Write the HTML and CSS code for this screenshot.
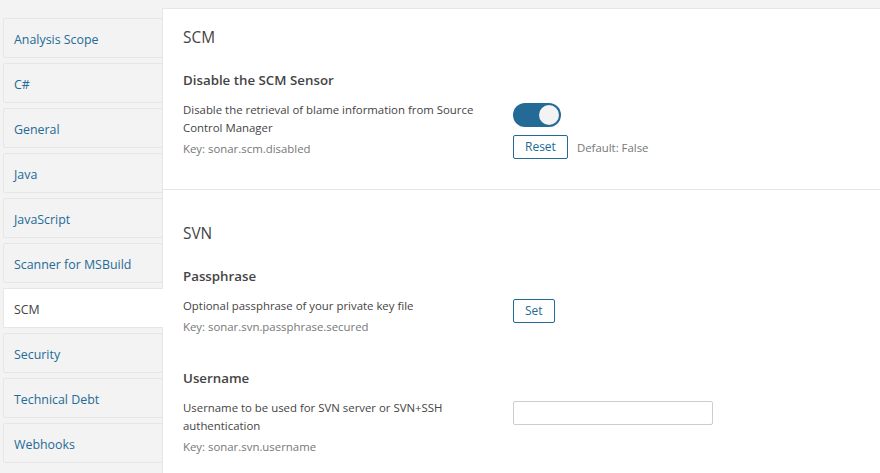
FILE: index.html
```html
<!DOCTYPE html>
<html lang="en">
<head>
<meta charset="utf-8">
<title>Settings</title>
<link rel="stylesheet" href="styles.css">
</head>
<body>
<div class="layout">
  <nav class="sidebar">
    <a class="cat">Analysis Scope</a>
    <a class="cat">C#</a>
    <a class="cat">General</a>
    <a class="cat">Java</a>
    <a class="cat">JavaScript</a>
    <a class="cat">Scanner for MSBuild</a>
    <a class="cat active">SCM</a>
    <a class="cat">Security</a>
    <a class="cat">Technical Debt</a>
    <a class="cat">Webhooks</a>
  </nav>
  <main class="panel">
    <section class="section first">
      <h2 class="section-title">SCM</h2>
      <div class="setting">
        <h3 class="setting-title">Disable the SCM Sensor</h3>
        <div class="setting-row">
          <div class="setting-desc">
            <div class="desc">Disable the retrieval of blame information from Source Control Manager</div>
            <div class="key">Key: sonar.scm.disabled</div>
          </div>
          <div class="setting-input">
            <div class="toggle"><span class="knob"></span></div>
            <div class="actions">
              <button class="btn">Reset</button>
              <span class="default">Default: False</span>
            </div>
          </div>
        </div>
      </div>
    </section>
    <section class="section">
      <h2 class="section-title">SVN</h2>
      <div class="setting">
        <h3 class="setting-title">Passphrase</h3>
        <div class="setting-row">
          <div class="setting-desc">
            <div class="desc">Optional passphrase of your private key file</div>
            <div class="key">Key: sonar.svn.passphrase.secured</div>
          </div>
          <div class="setting-input">
            <button class="btn">Set</button>
          </div>
        </div>
      </div>
      <div class="setting">
        <h3 class="setting-title">Username</h3>
        <div class="setting-row">
          <div class="setting-desc">
            <div class="desc">Username to be used for SVN server or SVN+SSH authentication</div>
            <div class="key">Key: sonar.svn.username</div>
          </div>
          <div class="setting-input">
            <input class="text-input" type="text">
          </div>
        </div>
      </div>
    </section>
  </main>
</div>
</body>
</html>
```
FILE: styles.css
```css
* { box-sizing: border-box; }
html, body { margin: 0; padding: 0; }
body {
  background: #f3f3f3;
  font-family: "Open Sans", "Noto Sans", sans-serif;
  font-size: 11.4px;
  color: #444;
  height: 473px;
  overflow: hidden;
}
.layout {
  display: flex;
  align-items: flex-start;
}
.sidebar {
  width: 163px;
  flex: none;
  padding: 18px 0 0 3px;
  display: flex;
  flex-direction: column;
  gap: 5px;
}
.cat {
  display: flex;
  align-items: center;
  height: 40px;
  padding: 2px 0 0 10px;
  border: 1px solid #e6e6e6;
  border-radius: 2px;
  background: #f3f3f3;
  color: #236a97;
  font-size: 12.4px;
  white-space: nowrap;
}
.cat.active {
  background: #fff;
  color: #444;
  position: relative;
  z-index: 1;
  border-right: none;
  border-radius: 2px 0 0 2px;
}
.panel {
  flex: 1;
  margin-top: 8px;
  margin-left: -1px;
  background: #fff;
  border-top: 1px solid #e6e6e6;
  border-left: 1px solid #e6e6e6;
  min-height: 470px;
}
.section {
  padding: 32px 20px 0 20px;
}
.section.first {
  padding-top: 17px;
  border-bottom: 1px solid #e6e6e6;
}
.section-title {
  margin: 0;
  font-size: 15.4px;
  line-height: 24px;
  font-weight: 400;
  color: #444;
}
.setting {
  padding-top: 20px;
  padding-bottom: 31px;
}
.section.first .setting {
  padding-bottom: 30px;
}
.setting + .setting {
  padding-top: 1px;
}
.setting-title {
  margin: 0;
  font-size: 13.3px;
  line-height: 20px;
  font-weight: 600;
  color: #444;
}
.setting-row {
  display: flex;
  gap: 20px;
  margin-top: 11px;
}
.setting-desc {
  width: 310px;
  flex: none;
}
.desc {
  line-height: 18px;
}
.key {
  margin-top: 3px;
  line-height: 18px;
  color: #777;
}
.setting-input {
  padding-top: 2px;
  display: flex;
  flex-direction: column;
  align-items: flex-start;
}
.toggle {
  width: 48px;
  height: 24px;
  border-radius: 12px;
  background: #236a97;
  display: flex;
  justify-content: flex-end;
  align-items: center;
  padding-right: 2px;
}
.knob {
  width: 20px;
  height: 20px;
  border-radius: 50%;
  background: #f3f3f3;
}
.actions {
  margin-top: 8px;
  display: flex;
  align-items: center;
  gap: 9px;
}
.btn {
  height: 24px;
  padding: 0 11px;
  border: 1px solid #236a97;
  border-radius: 2px;
  background: #fff;
  color: #236a97;
  font-family: inherit;
  font-size: 12px;
  line-height: 22px;
}
.default {
  color: #777;
}
.text-input {
  width: 200px;
  height: 24px;
  border: 1px solid #cdcdcd;
  border-radius: 2px;
  background: #fff;
  font-family: inherit;
  font-size: 12px;
  padding: 0 6px;
}
```
